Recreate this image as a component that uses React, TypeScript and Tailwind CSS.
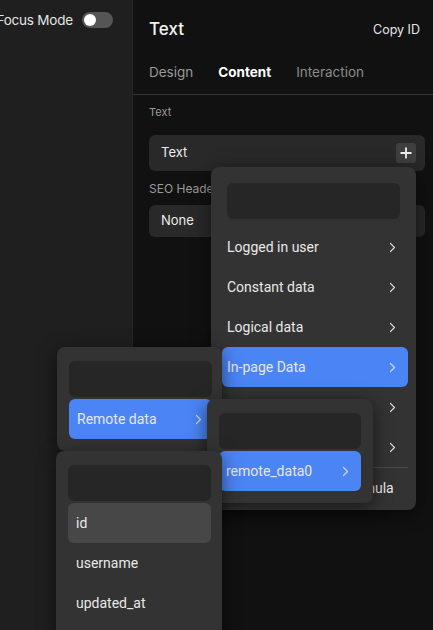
import React from "react";

const Chevron = () => (
  <svg width="7" height="11" viewBox="0 0 7 11" fill="none" className="shrink-0">
    <path d="M1.5 1.5 L5.5 5.5 L1.5 9.5" stroke="#d4d4d4" strokeWidth="1.2" strokeLinecap="round" strokeLinejoin="round" />
  </svg>
);

const Search = ({ w }: { w: string }) => (
  <div className={`h-[36px] ${w} rounded-md bg-[#262626]`} />
);

type ItemProps = { label: string; chevron?: boolean; active?: "blue" | "gray"; pl?: string; pr?: string };
const Item = ({ label, chevron, active, pl = "pl-[8px]", pr = "pr-[12px]" }: ItemProps) => (
  <div
    className={`h-[40px] flex items-center justify-between rounded-md ${pl} ${pr} text-[14px] text-[#e8e8e8] whitespace-nowrap ${
      active === "blue" ? "bg-[#4b84f5]" : active === "gray" ? "bg-[#474747]" : ""
    }`}
  >
    <span>{label}</span>
    {chevron && <Chevron />}
  </div>
);

export default function App() {
  return (
    <div className="relative w-[433px] h-[630px] overflow-hidden flex bg-[#111111]" style={{ fontFamily: "Inter, 'Noto Sans', sans-serif" }}>
      {/* left area */}
      <div className="w-[133px] shrink-0 bg-[#1f1f1f] border-r border-[#262626] overflow-hidden">
        <div className="h-[40px] flex items-center justify-end pr-[19px] gap-[9px]">
          <span className="text-[13.5px] tracking-[-0.2px] text-[#e4e4e4] whitespace-nowrap shrink-0">Focus Mode</span>
          <div className="w-[31px] h-[16px] shrink-0 rounded-full bg-[#555555] flex items-center pl-[2px]">
            <div className="w-[12px] h-[12px] rounded-full bg-white" />
          </div>
        </div>
      </div>

      {/* right panel */}
      <div className="flex-1 flex flex-col">
        <div className="h-[60px] flex items-center justify-between pl-4 pr-[13px]">
          <span className="text-[17px] font-medium text-[#f2f2f2]">Text</span>
          <span className="text-[12.5px] text-[#e6e6e6]">Copy ID</span>
        </div>
        <div className="h-[35px] pb-[9px] flex items-center gap-[25px] pl-4 border-b border-[#363636] text-[13.5px]">
          <span className="text-[#9a9a9a]">Design</span>
          <span className="text-white font-bold">Content</span>
          <span className="text-[#8a8a8a]">Interaction</span>
        </div>
        <div className="pl-4 pr-2 flex flex-col">
          <div className="mt-[9px] h-[16px] flex items-center text-[11px] text-[#9a9a9a]">Text</div>
          <div className="mt-[15px] h-[36px] rounded-md bg-[#292929] flex items-center justify-between pl-3 pr-[9px]">
            <span className="text-[13px] text-[#ececec]">Text</span>
            <div className="w-[20px] h-[20px] rounded-[3px] bg-[#3f3f3f] flex items-center justify-center">
              <svg width="14" height="14" viewBox="0 0 14 14">
                <path d="M7 1.5 V12.5 M1.5 7 H12.5" stroke="#f0f0f0" strokeWidth="1.8" />
              </svg>
            </div>
          </div>
          <div className="mt-[10px] h-[16px] flex items-center text-[12px] text-[#9a9a9a]">SEO Header</div>
          <div className="mt-[8px] h-[32px] rounded-md bg-[#292929] flex items-center pl-3">
            <span className="text-[13px] text-[#ececec]">None</span>
          </div>
        </div>
      </div>

      {/* menu 1 */}
      <div
        className="absolute left-[211px] top-[167px] w-[205px] h-[343px] rounded-lg bg-[#333333] shadow-[0_4px_18px_rgba(0,0,0,0.55)] flex flex-col pt-[16px]"
        style={{ fontFamily: "Roboto, 'Noto Sans', sans-serif" }}
      >
        <div className="px-[16px]">
          <Search w="w-full" />
        </div>
        <div className="mt-[8px] pl-[11px] pr-[8px] flex flex-col">
          <Item label="Logged in user" chevron pl="pl-[5px]" />
          <Item label="Constant data" chevron pl="pl-[5px]" />
          <Item label="Logical data" chevron pl="pl-[5px]" />
          <Item label="In-page Data" chevron active="blue" pl="pl-[5px]" />
          <Item label="Global data" chevron pl="pl-[5px]" />
          <Item label="Page parameters" chevron pl="pl-[5px]" />
          <div className="h-px bg-[#4a4a4a]" />
          <div className="h-[40px] flex items-center pl-[7px] text-[14px] text-[#e8e8e8] whitespace-nowrap">
            Bind value using a formula
          </div>
        </div>
      </div>

      {/* menu 2 */}
      <div
        className="absolute left-[57px] top-[347px] w-[165px] h-[104px] rounded-lg bg-[#333333] shadow-[0_4px_18px_rgba(0,0,0,0.55)] pt-[14px] pl-[12px] pr-[10px] flex flex-col gap-[2px]"
        style={{ fontFamily: "Roboto, 'Noto Sans', sans-serif" }}
      >
        <Search w="w-full" />
        <Item label="Remote data" chevron active="blue" pr="pr-[10px]" />
      </div>

      {/* menu 3 */}
      <div
        className="absolute left-[207px] top-[399px] w-[166px] h-[104px] rounded-lg bg-[#333333] shadow-[0_4px_18px_rgba(0,0,0,0.55)] pt-[14px] pl-[12px] pr-[12px] flex flex-col gap-[2px]"
        style={{ fontFamily: "Roboto, 'Noto Sans', sans-serif" }}
      >
        <Search w="w-full" />
        <Item label="remote_data0" chevron active="blue" pl="pl-[7px]" />
      </div>

      {/* menu 4 */}
      <div
        className="absolute left-[56px] top-[451px] w-[166px] h-[200px] rounded-lg bg-[#333333] shadow-[0_4px_18px_rgba(0,0,0,0.55)] pt-[14px] pl-[12px] pr-[11px] flex flex-col gap-[2px]"
        style={{ fontFamily: "Roboto, 'Noto Sans', sans-serif" }}
      >
        <Search w="w-full" />
        <div className="flex flex-col">
          <Item label="id" active="gray" />
          <Item label="username" />
          <Item label="updated_at" />
        </div>
      </div>
    </div>
  );
}
